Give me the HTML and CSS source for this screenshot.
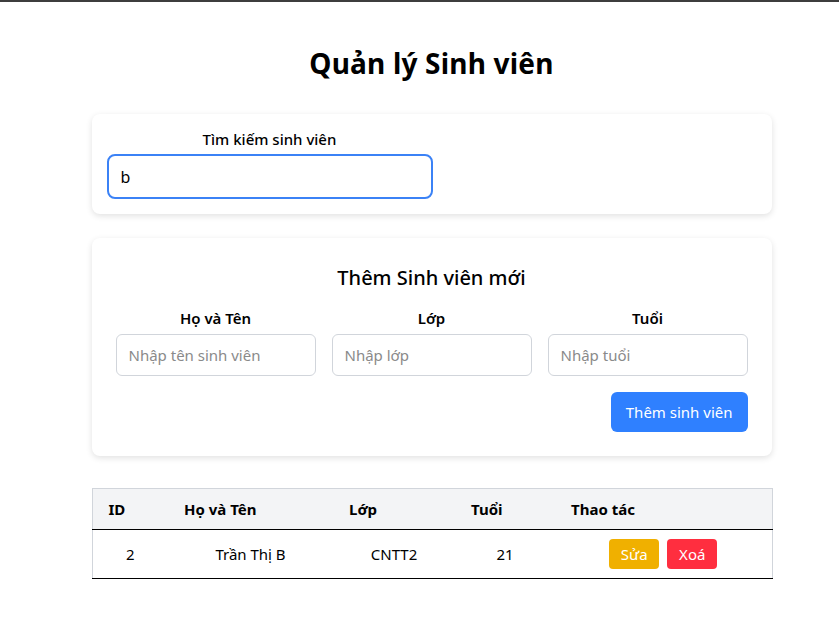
FILE: index.html
```html
<!DOCTYPE html>
<html lang="vi">
<head>
<meta charset="utf-8">
<title>Quản lý Sinh viên</title>
<link rel="stylesheet" href="styles.css">
</head>
<body>
<div class="topline"></div>
<main class="page">
  <h1 class="title">Quản lý Sinh viên</h1>

  <section class="card search-card">
    <div class="search-field">
      <label class="search-label" for="search">Tìm kiếm sinh viên</label>
      <input id="search" class="search-input" type="text" value="b">
    </div>
  </section>

  <section class="card add-card">
    <h2 class="add-title">Thêm Sinh viên mới</h2>
    <div class="form-grid">
      <div class="field">
        <label class="field-label">Họ và Tên</label>
        <input class="field-input" type="text" placeholder="Nhập tên sinh viên">
      </div>
      <div class="field">
        <label class="field-label">Lớp</label>
        <input class="field-input" type="text" placeholder="Nhập lớp">
      </div>
      <div class="field">
        <label class="field-label">Tuổi</label>
        <input class="field-input" type="text" placeholder="Nhập tuổi">
      </div>
    </div>
    <div class="actions">
      <button class="btn-add" type="button">Thêm sinh viên</button>
    </div>
  </section>

  <table class="students">
    <colgroup>
      <col class="c-id"><col class="c-name"><col class="c-class"><col class="c-age"><col class="c-act">
    </colgroup>
    <thead>
      <tr>
        <th>ID</th>
        <th>Họ và Tên</th>
        <th>Lớp</th>
        <th>Tuổi</th>
        <th>Thao tác</th>
      </tr>
    </thead>
    <tbody>
      <tr>
        <td>2</td>
        <td>Trần Thị B</td>
        <td>CNTT2</td>
        <td>21</td>
        <td>
          <div class="row-actions">
            <button class="btn-sm btn-edit" type="button">Sửa</button>
            <button class="btn-sm btn-del" type="button">Xoá</button>
          </div>
        </td>
      </tr>
    </tbody>
  </table>
</main>
</body>
</html>
```

FILE: styles.css
```css
* { box-sizing: border-box; }

html, body {
  margin: 0;
  padding: 0;
  background: #ffffff;
}

body {
  font-family: "Segoe UI", "Noto Sans", "Open Sans", sans-serif;
  color: #000;
}

.topline {
  height: 2px;
  background: #3d3d3d;
}

.page {
  width: 680px;
  margin: 0 auto;
  position: relative;
  left: 12px;
  padding-top: 36px;
  padding-bottom: 40px;
}

.title {
  margin: 0 0 26px;
  text-align: center;
  font-size: 28px;
  line-height: 50px;
  font-weight: 700;
  letter-spacing: 0.2px;
}

.card {
  background: #fff;
  border-radius: 8px;
  box-shadow: 0 2px 6px rgba(0, 0, 0, 0.12);
}

.search-card {
  padding: 15px;
}

.search-field {
  width: 326px;
  display: flex;
  flex-direction: column;
}

.search-label {
  text-align: center;
  font-size: 15px;
  font-weight: 500;
  line-height: 20px;
  margin-bottom: 5px;
}

.search-input {
  width: 100%;
  height: 45px;
  border: 2px solid #3b82f6;
  border-radius: 8px;
  padding: 0 12px;
  font-family: inherit;
  font-size: 16px;
  outline: none;
  color: #000;
}

.add-card {
  margin-top: 24px;
  padding: 24px;
}

.add-title {
  margin: 0 0 14px;
  text-align: center;
  font-size: 20px;
  font-weight: 500;
  line-height: 32px;
}

.form-grid {
  display: grid;
  grid-template-columns: repeat(3, minmax(0, 1fr));
  gap: 16px;
}

.field {
  display: flex;
  flex-direction: column;
  min-width: 0;
}

.field-label {
  text-align: center;
  font-size: 15px;
  font-weight: 600;
  line-height: 20px;
  margin-bottom: 6px;
}

.field-input {
  width: 100%;
  min-width: 0;
  height: 42px;
  border: 1px solid #d1d5db;
  border-radius: 6px;
  padding: 0 12px;
  font-family: inherit;
  font-size: 15px;
  outline: none;
}

.field-input::placeholder {
  color: #8a8a8a;
}

.actions {
  display: flex;
  justify-content: flex-end;
  margin-top: 16px;
}

.btn-add {
  height: 40px;
  padding: 0 15px;
  background: #2f80ff;
  color: #fff;
  border: none;
  border-radius: 6px;
  font-family: inherit;
  font-size: 15px;
}

.students {
  margin-top: 32px;
  width: 680px;
  border-collapse: collapse;
  table-layout: fixed;
  font-size: 15px;
}

.c-id { width: 76px; }
.c-name { width: 165px; }
.c-class { width: 122px; }
.c-age { width: 100px; }
.c-act { width: 217px; }

.students thead tr {
  background: #f3f4f6;
  border: 1px solid #d1d5db;
  border-bottom: 1px solid #000;
}

.students th {
  text-align: left;
  font-weight: 700;
  padding: 0 16px;
  height: 41px;
}

.students tbody tr {
  border-left: 1px solid #d1d5db;
  border-right: 1px solid #d1d5db;
  border-bottom: 1px solid #000;
}

.students td {
  text-align: center;
  height: 49px;
  padding: 0 8px;
}

.row-actions {
  display: flex;
  justify-content: center;
  gap: 8px;
}

.btn-sm {
  width: 50px;
  height: 30px;
  border: none;
  border-radius: 4px;
  color: #fff;
  font-family: inherit;
  font-size: 15px;
  padding: 0;
}

.btn-edit { background: #f0b000; }
.btn-del { background: #ff2e3f; }
```
